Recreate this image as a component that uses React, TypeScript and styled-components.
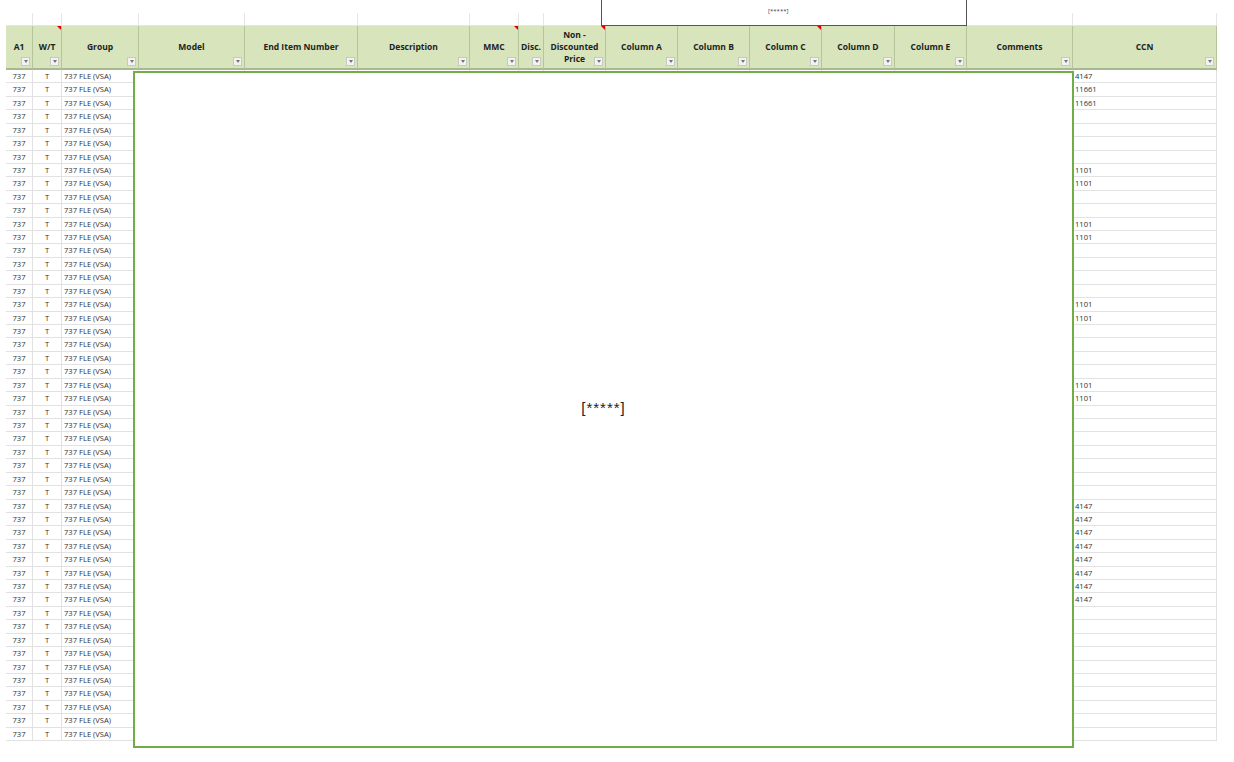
import React from "react";
import styled, { createGlobalStyle } from "styled-components";

const Global = createGlobalStyle`
  html, body { margin: 0; padding: 0; background: #fff; }
  body { font-family: "Open Sans", "Liberation Sans", sans-serif; }
`;

const widths = [27, 29, 77, 106, 113, 112, 49, 25, 62, 72, 72, 72, 73, 72, 106, 144];
const cols = widths.map((w) => `${w}px`).join(" ");

const headers: { t: string; note?: boolean; filter: boolean }[] = [
  { t: "A1", filter: true },
  { t: "W/T", note: true, filter: true },
  { t: "Group", filter: true },
  { t: "Model", filter: true },
  { t: "End Item Number", filter: true },
  { t: "Description", filter: true },
  { t: "MMC", note: true, filter: true },
  { t: "Disc.", filter: true },
  { t: "Non -\nDiscounted\nPrice", note: true, filter: true },
  { t: "Column A", filter: true },
  { t: "Column B", filter: true },
  { t: "Column C", note: true, filter: true },
  { t: "Column D", filter: true },
  { t: "Column E", filter: true },
  { t: "Comments", filter: true },
  { t: "CCN", filter: true },
];

const ccn: Record<number, string> = { 0: "4147", 1: "11661", 2: "11661", 7: "1101", 8: "1101", 11: "1101", 12: "1101", 17: "1101", 18: "1101", 23: "1101", 24: "1101" };
for (let i = 32; i <= 39; i++) ccn[i] = "4147";

const Page = styled.div`
  position: relative;
  width: 1234px;
  height: 762px;
  padding: 13px 0 0 6px;
  box-sizing: border-box;
  overflow: hidden;
`;

const Sheet = styled.div`
  display: grid;
  grid-template-columns: ${cols};
  grid-auto-rows: 13.43px;
  grid-template-rows: 13px 44px;
`;

const Blank = styled.div`
  border-right: 1px solid #e6e6e6;
  border-bottom: 1px solid #e6e6e6;
`;

const Head = styled.div`
  position: relative;
  background: #d8e4bc;
  border-right: 1px solid #b5c49a;
  border-bottom: 2px solid #a8b890;
  font-weight: 700;
  font-size: 8.5px;
  color: #222;
  display: flex;
  align-items: center;
  justify-content: center;
  text-align: center;
  white-space: pre-line;
  line-height: 12px;
`;

const Filter = styled.div`
  position: absolute;
  right: 2px;
  bottom: 2px;
  width: 9px;
  height: 9px;
  background: #f2f2f2;
  border: 1px solid #c8c8c8;
  box-sizing: border-box;
  display: flex;
  align-items: center;
  justify-content: center;
  &::after {
    content: "";
    border-left: 2px solid transparent;
    border-right: 2px solid transparent;
    border-top: 3px solid #777;
  }
`;

const Note = styled.div`
  position: absolute;
  right: 0;
  top: 0;
  border-left: 4px solid transparent;
  border-top: 4px solid #d00;
`;

const Cell = styled.div<{ $align?: string }>`
  border-right: 1px solid #e2e2e2;
  border-bottom: 1px solid #e2e2e2;
  font-size: 7.6px;
  color: #333;
  line-height: 12.4px;
  padding: 0 2px;
  text-align: ${(p) => p.$align || "left"};
  white-space: nowrap;
  overflow: hidden;
`;

const Overlay = styled.div`
  position: absolute;
  left: 133px;
  top: 71px;
  width: 941px;
  height: 677px;
  border: 2px solid #70ad47;
  box-sizing: border-box;
  background: #fff;
  display: flex;
  align-items: center;
  justify-content: center;
  font-family: "Liberation Sans", sans-serif;
  font-size: 15px;
  letter-spacing: 1px;
  color: #222;
  padding-bottom: 4px;
`;

const TopBox = styled.div`
  position: absolute;
  left: 601px;
  top: -1px;
  width: 366px;
  height: 27px;
  border: 1px solid #555;
  box-sizing: border-box;
  background: #fff;
  font-size: 6px;
  color: #444;
  padding: 7px 0 0 166px;
`;

export default function App() {
  const rows = Array.from({ length: 50 }, (_, i) => i);
  return (
    <>
      <Global />
      <Page>
        <Sheet>
          {widths.map((_, i) => <Blank key={"b" + i} />)}
          {headers.map((h, i) => (
            <Head key={"h" + i}>
              {h.t}
              {h.note && <Note />}
              {h.filter && <Filter />}
            </Head>
          ))}
          {rows.map((r) => (
            <React.Fragment key={r}>
              <Cell $align="center">737</Cell>
              <Cell $align="center">T</Cell>
              <Cell>737 FLE (VSA)</Cell>
              {widths.slice(3, 15).map((_, j) => <Cell key={j} />)}
              <Cell>{ccn[r] || ""}</Cell>
            </React.Fragment>
          ))}
        </Sheet>
        <Overlay>[*****]</Overlay>
        <TopBox>[*****]</TopBox>
      </Page>
    </>
  );
}
